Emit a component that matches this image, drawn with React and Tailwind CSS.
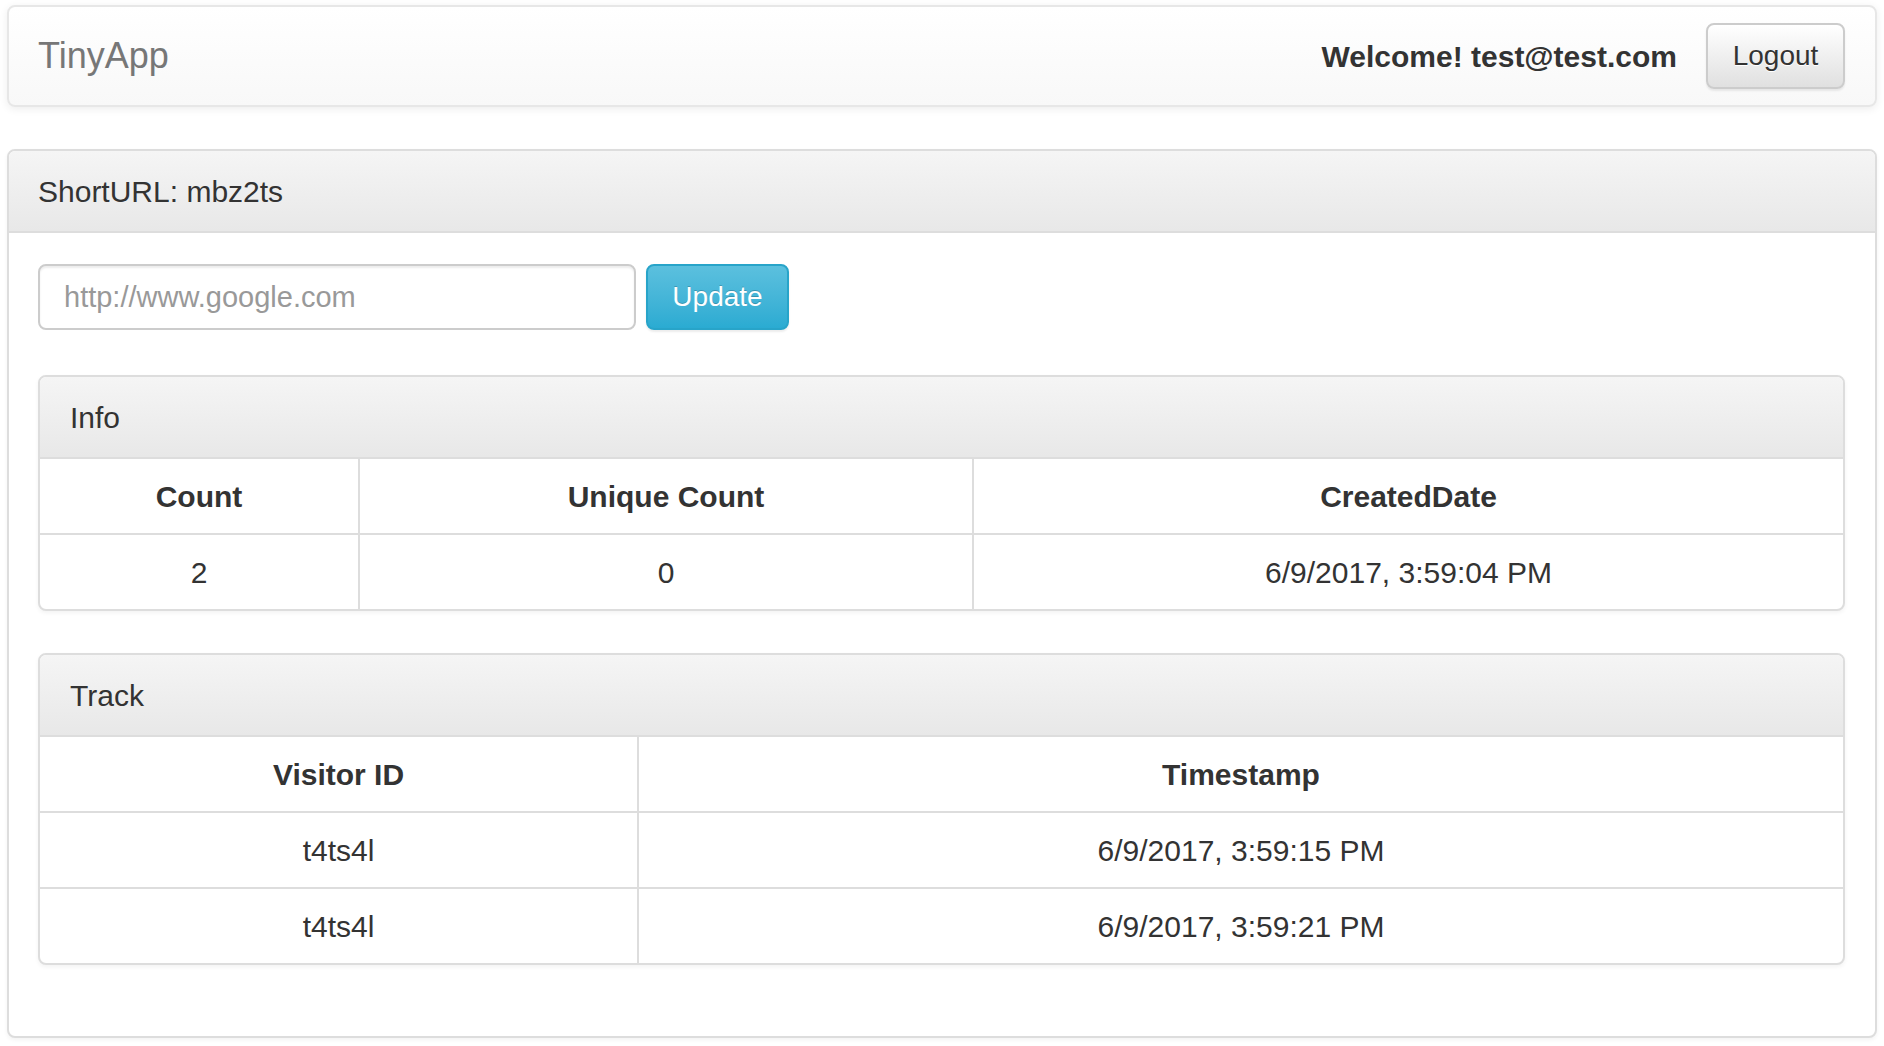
const info = { count: 2, unique: 0, created: '6/9/2017, 3:59:04 PM' }

const visits = [
  { id: 't4ts4l', ts: '6/9/2017, 3:59:15 PM' },
  { id: 't4ts4l', ts: '6/9/2017, 3:59:21 PM' },
]

function SubPanel({ title, children }) {
  return (
    <div className="rounded-lg border-2 border-[#ddd] bg-white shadow-[0_2px_4px_rgba(0,0,0,0.05)] overflow-hidden">
      <div className="h-[82px] flex items-center px-[30px] border-b-2 border-[#ddd] bg-linear-to-b from-[#f5f5f5] to-[#e8e8e8] text-[30px]">
        {title}
      </div>
      {children}
    </div>
  )
}

function Row({ cells, head, last }) {
  return (
    <div className={`flex ${last ? 'h-[74px]' : 'h-[76px] border-b-2 border-[#ddd]'} ${head ? 'font-bold' : ''}`}>
      {cells.map((c, i) => (
        <div
          key={i}
          className={`flex items-center justify-center text-[30px] ${c.w ?? 'flex-1'} ${i < cells.length - 1 ? 'border-r-2 border-[#ddd]' : ''}`}
        >
          {c.text}
        </div>
      ))}
    </div>
  )
}

export default function App() {
  return (
    <div className="min-h-screen bg-white px-[7px] pt-[5px] font-['Liberation_Sans',Arial,sans-serif] text-[#333]">

      {/* Navbar */}
      <nav className="h-[102px] w-[1870px] rounded-lg border-2 border-[#e7e7e7] bg-linear-to-b from-white to-[#f8f8f8] shadow-[0_2px_8px_rgba(0,0,0,0.075)] flex items-center justify-between pl-[29px] pr-[30px]">
        <span className="text-[36px] text-[#777]">TinyApp</span>
        <div className="flex items-center gap-[29px]">
          <span className="text-[30px] font-bold">Welcome! test@test.com</span>
          <button className="w-[139px] h-[66px] rounded-lg border-2 border-[#ccc] bg-linear-to-b from-white to-[#e0e0e0] text-[28px] text-[#333] [text-shadow:0_1px_0_#fff] shadow-[0_2px_2px_rgba(0,0,0,0.075)]">
            Logout
          </button>
        </div>
      </nav>

      {/* Main panel */}
      <div className="mt-[42px] w-[1870px] rounded-lg border-2 border-[#ddd] bg-white shadow-[0_2px_4px_rgba(0,0,0,0.05)] overflow-hidden">
        <div className="h-[82px] flex items-center pl-[29px] border-b-2 border-[#ddd] bg-linear-to-b from-[#f5f5f5] to-[#e8e8e8] text-[30px]">
          ShortURL: mbz2ts
        </div>

        <div className="pl-[29px] pr-[30px] pt-[31px] pb-[71px]">
          <div className="flex gap-[10px]">
            <input
              placeholder="http://www.google.com"
              className="w-[598px] h-[66px] rounded-lg border-2 border-[#ccc] px-[24px] text-[29px] text-[#555] placeholder:text-[#999] shadow-[inset_0_2px_2px_rgba(0,0,0,0.075)] outline-none"
            />
            <button className="w-[143px] h-[66px] rounded-lg border-2 border-[#28a4c9] bg-linear-to-b from-[#5bc0de] to-[#2aabd2] text-[28px] text-white [text-shadow:0_-1px_0_rgba(0,0,0,0.2)] shadow-[0_2px_2px_rgba(0,0,0,0.075)]">
              Update
            </button>
          </div>

          <div className="mt-[45px]">
            <SubPanel title="Info">
              <Row head cells={[{ text: 'Count', w: 'w-[320px]' }, { text: 'Unique Count', w: 'w-[614px]' }, { text: 'CreatedDate' }]} />
              <Row last cells={[{ text: info.count, w: 'w-[320px]' }, { text: info.unique, w: 'w-[614px]' }, { text: info.created }]} />
            </SubPanel>
          </div>

          <div className="mt-[42px]">
            <SubPanel title="Track">
              <Row head cells={[{ text: 'Visitor ID', w: 'w-[599px]' }, { text: 'Timestamp' }]} />
              {visits.map((v, i) => (
                <Row key={i} last={i === visits.length - 1} cells={[{ text: v.id, w: 'w-[599px]' }, { text: v.ts }]} />
              ))}
            </SubPanel>
          </div>
        </div>
      </div>
    </div>
  )
}
